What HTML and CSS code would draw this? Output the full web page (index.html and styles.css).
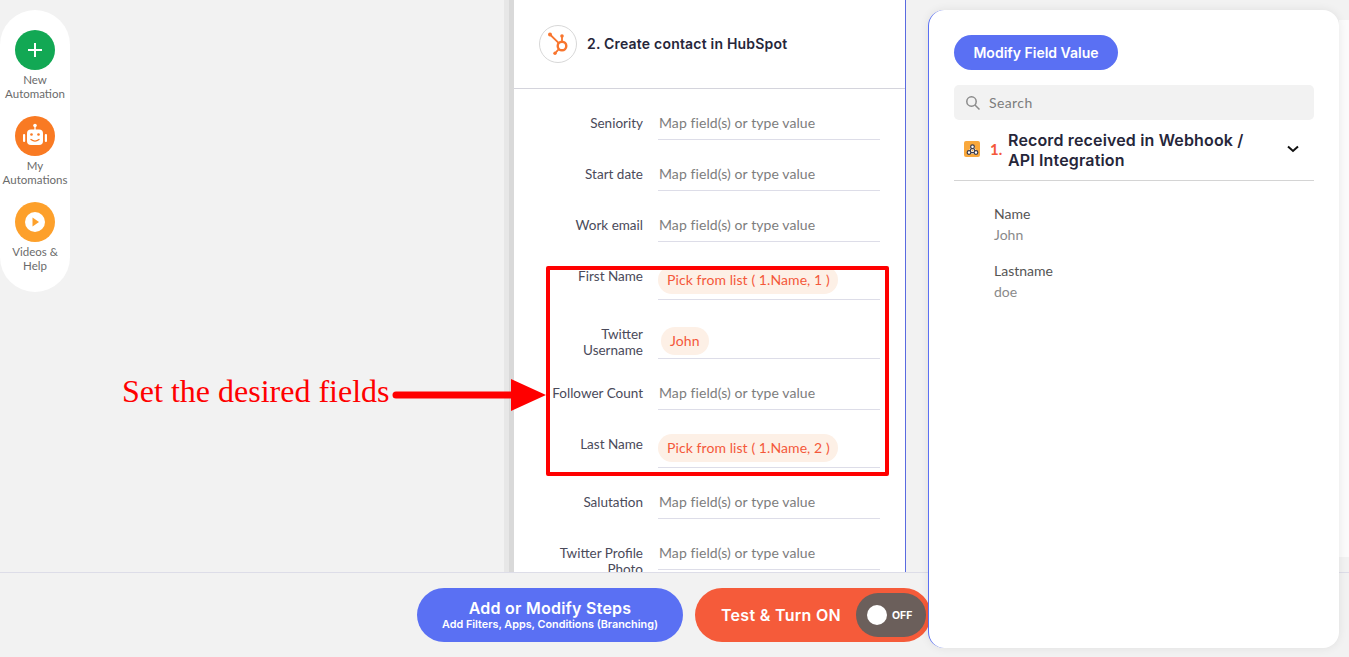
FILE: index.html
```html
<!DOCTYPE html>
<html lang="en">
<head>
<meta charset="utf-8">
<title>Create contact in HubSpot</title>
<link rel="stylesheet" href="styles.css">
</head>
<body>
<div class="page">
  <div class="main">
    <nav class="rail">
      <a class="rail-item">
        <span class="rail-ico green"><svg width="20" height="20" viewBox="0 0 20 20"><path d="M10 3v14M3 10h14" stroke="#fff" stroke-width="2"/></svg></span>
        <span class="rail-text">New Automation</span>
      </a>
      <a class="rail-item">
        <span class="rail-ico orange"><svg width="28" height="28" viewBox="0 0 28 28"><circle cx="14" cy="3.500" r="1.800" fill="#fff"/><path d="M14 4v4" stroke="#fff" stroke-width="1.300"/><rect x="6" y="7.500" width="16" height="15.500" rx="4" fill="#fff"/><rect x="2" y="12" width="2.200" height="8" rx="1" fill="#fff"/><rect x="23.800" y="12" width="2.200" height="8" rx="1" fill="#fff"/><circle cx="10.500" cy="12.500" r="1.300" fill="#f97a23"/><circle cx="17.500" cy="12.500" r="1.300" fill="#f97a23"/><path d="M10 17.500c2.500 2 5.500 2 8 0" stroke="#f97a23" stroke-width="1.300" fill="none" stroke-linecap="round"/></svg></span>
        <span class="rail-text">My Automations</span>
      </a>
      <a class="rail-item">
        <span class="rail-ico amber"><svg width="20" height="20" viewBox="0 0 20 20"><circle cx="10" cy="10" r="10" fill="#fff"/><path d="M7.500 5.500l6.500 4.500-6.500 4.500z" fill="#fda02b"/></svg></span>
        <span class="rail-text">Videos &amp; Help</span>
      </a>
    </nav>
    <section class="editor">
      <header class="editor-head">
        <span class="app-badge">
          <svg width="26" height="26" viewBox="0 0 26 26" fill="none" stroke="#f8752e">
            <circle cx="17" cy="15" r="4.300" stroke-width="2.400"/>
            <path d="M17 11V5M13.800 12.200L5 3.500M13.800 18.200L10 22.300" stroke-width="1.800"/>
            <circle cx="17" cy="5" r="1.800" fill="#f8752e" stroke="none"/>
            <circle cx="5" cy="3.500" r="2" fill="#f8752e" stroke="none"/>
            <circle cx="10" cy="22.300" r="1.700" fill="#f8752e" stroke="none"/>
          </svg>
        </span>
        <h2 class="step-title">2. Create contact in HubSpot</h2>
      </header>
      <div class="fields">
        <div class="row"><label class="lbl">Seniority</label><div class="val">Map field(s) or type value</div></div>
        <div class="row"><label class="lbl">Start date</label><div class="val">Map field(s) or type value</div></div>
        <div class="row"><label class="lbl">Work email</label><div class="val">Map field(s) or type value</div></div>
        <div class="row"><label class="lbl">First Name</label><div class="val chipped"><span class="chip">Pick from list ( 1.Name, 1 )</span></div></div>
        <div class="row"><label class="lbl">Twitter Username</label><div class="val chipped lowered"><span class="chip john">John</span></div></div>
        <div class="row"><label class="lbl">Follower Count</label><div class="val">Map field(s) or type value</div></div>
        <div class="row"><label class="lbl">Last Name</label><div class="val chipped"><span class="chip">Pick from list ( 1.Name, 2 )</span></div></div>
        <div class="row"><label class="lbl">Salutation</label><div class="val">Map field(s) or type value</div></div>
        <div class="row"><label class="lbl">Twitter Profile Photo</label><div class="val">Map field(s) or type value</div></div>
      </div>
    </section>
    <div class="backdrop"></div>
  </div>
  <footer class="bar">
    <button class="btn-steps"><span class="steps-main">Add or Modify Steps</span><span class="steps-sub">Add Filters, Apps, Conditions (Branching)</span></button>
    <button class="btn-test"><span class="test-text">Test &amp; Turn ON</span><span class="toggle"><span class="knob"></span><span class="off">OFF</span></span></button>
  </footer>

  <aside class="panel">
    <button class="modify">Modify Field Value</button>
    <div class="search">
      <svg width="16" height="16" viewBox="0 0 16 16" fill="none" stroke="#8a8a8a" stroke-width="1.500"><circle cx="6.500" cy="6.500" r="4.700"/><path d="M10 10l4.500 4.500"/></svg>
      <span>Search</span>
    </div>
    <div class="source">
      <span class="src-ico"><svg width="13" height="13" viewBox="0 0 12 12" fill="#fff" stroke="#3a3a4a" stroke-width="1.100"><path d="M6 3.500L2.800 8.800h6.400z" fill="none" stroke="#fff" stroke-width="2.200"/><circle cx="6" cy="3.500" r="1.700"/><circle cx="2.800" cy="8.800" r="1.700"/><circle cx="9.200" cy="8.800" r="1.700"/><path d="M5 5l-1.500 2.500M4.500 8.800h3M7 5l1.500 2.500" fill="none"/></svg></span>
      <span class="src-num">1.</span>
      <span class="src-title">Record received in Webhook / API Integration</span>
      <svg class="chev" width="12" height="8" viewBox="0 0 12 8" fill="none" stroke="#111" stroke-width="2"><path d="M1 1.500l5 4.500 5-4.500"/></svg>
    </div>
    <dl class="data">
      <dt>Name</dt><dd>John</dd>
      <dt>Lastname</dt><dd>doe</dd>
    </dl>
  </aside>

  <div class="note">Set the desired fields</div>
  <svg class="note-arrow" width="156" height="34" viewBox="0 0 156 34"><path d="M6 17H125" stroke="#f00" stroke-width="7" stroke-linecap="round"/><path d="M121 1l35 16-35 16z" fill="#f00"/></svg>
  <div class="note-box"></div>
</div>
</body>
</html>
```
FILE: styles.css
```css
* { box-sizing: border-box; }
html, body { margin: 0; height: 100%; }
body { font-family: "Lato", "Liberation Sans", sans-serif; color: #2b2b3a; overflow: hidden; }
.page { position: relative; width: 1349px; height: 657px; background: #f2f2f2; overflow: hidden; }
.main { display: flex; height: 572px; overflow: hidden; }
.rail { width: 70px; height: 282px; margin-top: 10px; padding-top: 20px; background: #fff; border-radius: 35px; display: flex; flex-direction: column; gap: 12px; flex: none; }
.rail-item { display: flex; flex-direction: column; align-items: center; height: 74px; }
.rail-ico { width: 40px; height: 40px; border-radius: 50%; display: flex; align-items: center; justify-content: center; flex: none; }
.green { background: #12a854; }
.orange { background: #f97a23; }
.amber { background: #fda02b; }
.rail-text { width: 70px; text-align: center; font-size: 11.500px; line-height: 14px; color: #6b6b6b; margin-top: 3px; }
.editor { width: 397px; margin-left: 439px; flex: none; background: #fff; border-left: 5px solid #d9d9d9; border-right: 1px solid #5a6be0; box-shadow: -5px 0 0 #e7e7e7; }
.backdrop { width: 10px; height: 537px; margin: 20px 0 0 auto; background: #fbfbfb; flex: none; }
.editor-head { height: 89px; display: flex; align-items: center; padding: 0 0 1px 25px; border-bottom: 1px solid #d4d4dc; }
.app-badge { width: 38px; height: 38px; border: 1px solid #d8d8d8; border-radius: 50%; display: flex; align-items: center; justify-content: center; flex: none; }
.step-title { margin: 0 0 0 10px; font-size: 14px; font-weight: 600; letter-spacing: .2px; color: #26263a; font-family: "Inter", sans-serif; }
.row { display: flex; margin-top: 20px; }
.lbl { width: 129px; flex: none; padding: 6px 0 0 37px; text-align: right; font-size: 13.500px; line-height: 16px; color: #4a4a5a; }
.val { width: 222px; margin-left: 15px; height: 31px; padding: 6px 0 0 1px; border-bottom: 1px solid #dddde8; font-size: 14px; letter-spacing: .08px; line-height: 16px; color: #7d7d7d; }
.chipped { height: 38px; padding: 4px 0 0 0; }
.chipped.lowered { height: 39px; padding-top: 7px; }
.chip { display: inline-block; height: 28px; padding: 0 8px 0 9px; border-radius: 14px; background: #fdf0e6; color: #f4583a; font-size: 14px; line-height: 28px; }
.chip.john { margin-left: 3px; padding: 0 9px; }
.bar { height: 85px; border-top: 1px solid #dddde8; padding: 15px 0 0 417px; display: flex; gap: 12px; align-items: flex-start; }
button { font-family: "Inter", sans-serif; border: 0; color: #fff; padding: 0; }
.btn-steps { width: 266px; height: 54px; border-radius: 27px; background: #5a70f3; display: flex; flex-direction: column; align-items: center; justify-content: center; }
.steps-main { font-size: 16px; font-weight: 600; letter-spacing: .25px; line-height: 20px; }
.steps-sub { font-size: 10.800px; font-weight: 600; line-height: 14px; }
.btn-test { width: 236px; height: 54px; border-radius: 27px; background: #f55b3a; display: flex; align-items: center; padding-left: 26px; flex: none; }
.test-text { font-size: 16px; font-weight: 600; letter-spacing: .3px; width: 135px; text-align: left; line-height: 20px; }
.toggle { width: 70px; height: 44px; border-radius: 22px; background: #6b5f5b; display: flex; align-items: center; padding-left: 11px; gap: 5px; }
.knob { width: 20px; height: 20px; border-radius: 50%; background: #fff; flex: none; }
.off { font-size: 10.500px; font-weight: 700; }
.panel { position: absolute; left: 928px; top: 10px; width: 411px; height: 638px; padding: 25px 25px 0; background: #fff; border-left: 1px solid #5a70f3; border-radius: 16px; box-shadow: 0 0 10px rgba(0,0,0,.08); }
.modify { display: block; width: 164px; height: 35px; border-radius: 18px; background: #5a70f3; font-size: 14px; font-weight: 600; }
.search { display: flex; align-items: center; gap: 8px; width: 360px; height: 35px; margin-top: 15px; padding-left: 11px; border-radius: 5px; background: #f2f2f2; font-size: 14px; letter-spacing: .4px; color: #7d7d7d; }
.source { display: flex; align-items: center; width: 360px; height: 61px; border-bottom: 1px solid #d4d4d4; padding: 0 0 2px 10px; }
.src-ico { width: 16px; height: 16px; border-radius: 2px; background: #f9a83c; display: flex; align-items: center; justify-content: center; flex: none; }
.src-num { margin: 0 5px 0 10px; color: #f4583a; font-weight: 700; font-size: 15px; flex: none; width: 13px; }
.src-title { width: 250px; padding-top: 2px; font-family: "Inter", sans-serif; font-size: 16px; line-height: 20px; font-weight: 600; letter-spacing: .15px; color: #26263a; flex: none; }
.chev { margin-left: 29px; flex: none; }
.data { margin: 25px 0 0 40px; font-size: 14px; line-height: 16px; }
.data dt { color: #555; }
.data dd { margin: 5px 0 20px; color: #8a8a8a; }
.note { position: absolute; left: 122px; top: 374px; font-family: "Liberation Serif", serif; font-size: 32px; line-height: 34px; color: #f00; white-space: nowrap; }
.note-arrow { position: absolute; left: 390px; top: 378px; }
.note-box { position: absolute; left: 546px; top: 266px; width: 343px; height: 210px; border: 4px solid #f00; border-radius: 2px; }
```
